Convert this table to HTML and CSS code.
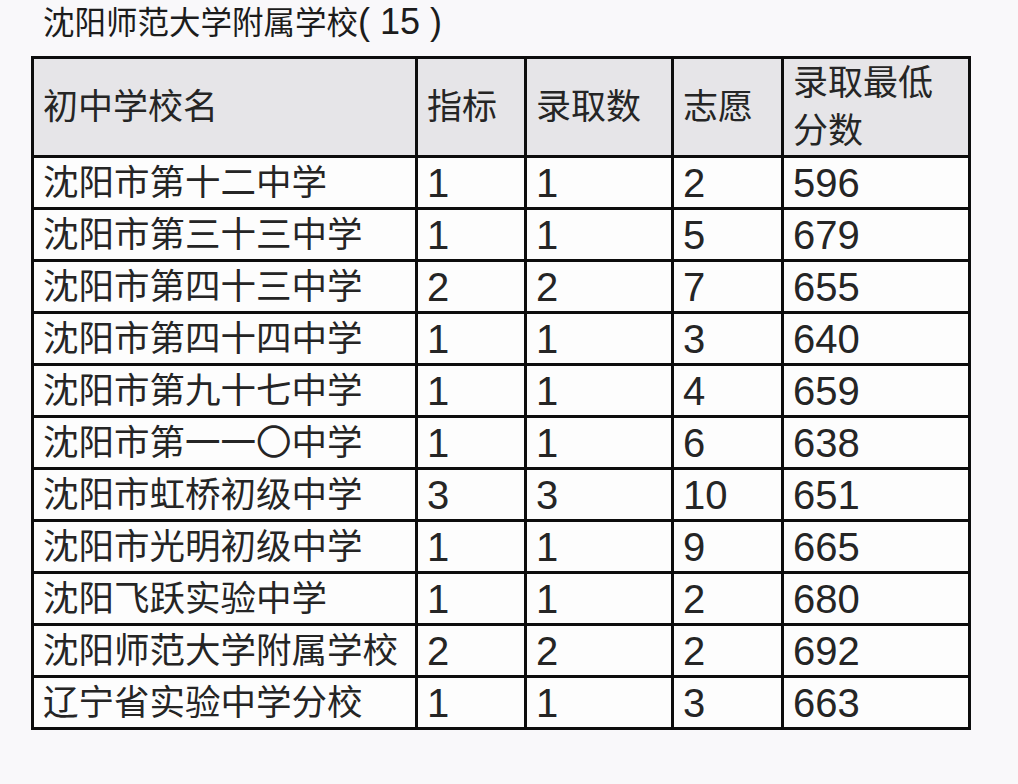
FILE: index.html
```html
<!DOCTYPE html>
<html lang="zh-CN">
<head>
<meta charset="utf-8">
<title>沈阳师范大学附属学校</title>
<link rel="stylesheet" href="styles.css">
</head>
<body>
<div class="page">
  <h1 class="title">沈阳师范大学附属学校<span class="num">( 15 )</span></h1>
  <table class="grid">
    <colgroup>
      <col class="c-name"><col class="c-quota"><col class="c-admit"><col class="c-wish"><col class="c-score">
    </colgroup>
    <thead>
      <tr class="head">
        <th>初中学校名</th><th>指标</th><th>录取数</th><th>志愿</th><th class="wrap">录取最低分数</th>
      </tr>
    </thead>
    <tbody>
      <tr><td>沈阳市第十二中学</td><td>1</td><td>1</td><td>2</td><td>596</td></tr>
      <tr><td>沈阳市第三十三中学</td><td>1</td><td>1</td><td>5</td><td>679</td></tr>
      <tr><td>沈阳市第四十三中学</td><td>2</td><td>2</td><td>7</td><td>655</td></tr>
      <tr><td>沈阳市第四十四中学</td><td>1</td><td>1</td><td>3</td><td>640</td></tr>
      <tr><td>沈阳市第九十七中学</td><td>1</td><td>1</td><td>4</td><td>659</td></tr>
      <tr><td>沈阳市第一一〇中学</td><td>1</td><td>1</td><td>6</td><td>638</td></tr>
      <tr><td>沈阳市虹桥初级中学</td><td>3</td><td>3</td><td>10</td><td>651</td></tr>
      <tr><td>沈阳市光明初级中学</td><td>1</td><td>1</td><td>9</td><td>665</td></tr>
      <tr><td>沈阳飞跃实验中学</td><td>1</td><td>1</td><td>2</td><td>680</td></tr>
      <tr><td>沈阳师范大学附属学校</td><td>2</td><td>2</td><td>2</td><td>692</td></tr>
      <tr><td>辽宁省实验中学分校</td><td>1</td><td>1</td><td>3</td><td>663</td></tr>
    </tbody>
  </table>
</div>
</body>
</html>
```

FILE: styles.css
```css
html, body {
  margin: 0;
  padding: 0;
  background: #f9f8fa;
}

.page {
  padding: 0 0 0 31px;
  font-family: "Liberation Sans", "Noto Sans CJK SC", sans-serif;
  color: #252525;
}

.title {
  margin: 0 0 0 12px;
  height: 56px;
  font-size: 31.5px;
  font-weight: 400;
  line-height: 44px;
  color: #1c1c1c;
  white-space: nowrap;
}

.title .num {
  font-size: 36px;
}

.grid {
  border-collapse: separate;
  border-spacing: 0;
  table-layout: fixed;
  width: 940px;
  border-top: 3px solid #0d0d0d;
  border-left: 3px solid #0d0d0d;
  font-size: 35px;
}

.c-name { width: 384px; }
.c-quota { width: 109px; }
.c-admit { width: 147px; }
.c-wish { width: 110px; }
.c-score { width: 187px; }

.grid th,
.grid td {
  box-sizing: border-box;
  border-right: 3px solid #0d0d0d;
  border-bottom: 3px solid #0d0d0d;
  padding: 0 0 0 9px;
  text-align: left;
  vertical-align: middle;
  font-weight: 400;
  white-space: nowrap;
  line-height: 40px;
}

.grid thead th {
  background: #e6e5e8;
  height: 98px;
}

.grid thead th.wrap {
  white-space: normal;
  line-height: 48px;
  padding-right: 10px;
}

.grid tbody td {
  background: #fdfdfd;
  height: 52px;
  padding-top: 1px;
  font-size: 40px;
}

.grid tbody td:first-child {
  font-size: 35.5px;
}
```
